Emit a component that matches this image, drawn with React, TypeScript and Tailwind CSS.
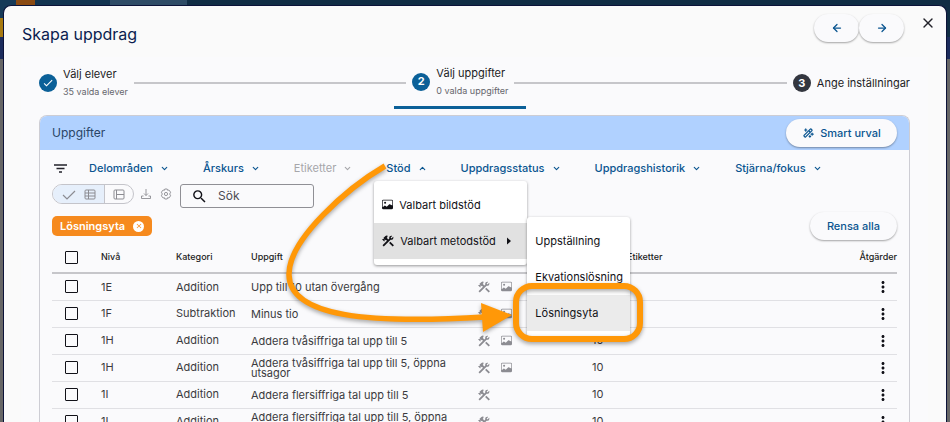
import { Fragment } from 'react'
import type { ReactNode } from 'react'
import { BsImage } from 'react-icons/bs'
import { MdMoreVert, MdSearch, MdClose, MdCheck } from 'react-icons/md'
import { PiMagicWandBold } from 'react-icons/pi'
import { ArrowLeft, ArrowRight, ChevronDown, ChevronUp, X } from 'lucide-react'

const filters = [
  { name: 'Delområden' },
  { name: 'Årskurs' },
  { name: 'Etiketter', disabled: true },
  { name: 'Stöd', open: true },
  { name: 'Uppdragsstatus' },
  { name: 'Uppdragshistorik' },
  { name: 'Stjärna/fokus' },
]

const methods = ['Uppställning', 'Ekvationslösning', 'Lösningsyta']

const rows = [
  { level: '1E', category: 'Addition', task: 'Upp till 10 utan övergång', image: true },
  { level: '1F', category: 'Subtraktion', task: 'Minus tio', image: true },
  { level: '1H', category: 'Addition', task: 'Addera tvåsiffriga tal upp till 5', image: true, count: 10 },
  { level: '1H', category: 'Addition', task: 'Addera tvåsiffriga tal upp till 5, öppna utsagor', image: true, count: 10 },
  { level: '1I', category: 'Addition', task: 'Addera flersiffriga tal upp till 5', image: false, count: 10 },
  { level: '1I', category: 'Addition', task: 'Addera flersiffriga tal upp till 5, öppna utsagor', image: false, count: 10 },
]

function Pill({ children, className = '', ...rest }: { children: ReactNode; className?: string; 'aria-label'?: string }) {
  return (
    <button
      className={`flex h-7 items-center justify-center gap-1.5 rounded-full bg-[#fafafc] text-[11px] font-medium text-[#0a5590] shadow-[0_1px_2px_rgba(0,0,0,0.35)] ${className}`}
      {...rest}
    >
      {children}
    </button>
  )
}

function ToolsIcon() {
  return (
    <svg viewBox="2 2 20 20" className="size-3" fill="currentColor" aria-hidden="true">
      <path d="M13.78 15.3L19.78 21.3L21.89 19.14L15.89 13.14L13.78 15.3M17.5 10.1C17.11 10.1 16.69 10.05 16.36 9.91L4.97 21.25L2.86 19.14L10.27 11.74L8.5 9.96L7.78 10.66L6.33 9.25V12.11L5.63 12.81L2.11 9.25L2.81 8.55H5.62L4.22 7.14L7.78 3.58C8.95 2.41 10.83 2.41 12 3.58L9.89 5.74L11.3 7.14L10.59 7.85L12.38 9.63L14.2 7.75C14.06 7.42 14 7 14 6.63C14 4.66 15.56 3.11 17.5 3.11C18.09 3.11 18.61 3.25 19.08 3.53L16.41 6.2L17.91 7.7L20.58 5.03C20.86 5.5 21 6 21 6.63C21 8.55 19.45 10.1 17.5 10.1Z" />
    </svg>
  )
}

function Checkbox({ label }: { label: string }) {
  return (
    <input
      type="checkbox"
      aria-label={label}
      className="block size-[13px] appearance-none rounded-[1px] border-[1.5px] border-[#111118] checked:bg-[#0b6098]"
    />
  )
}

function StepBadge({ children, className }: { children: ReactNode; className: string }) {
  return (
    <span className={`flex size-[18px] shrink-0 items-center justify-center rounded-full text-[11px] font-bold text-white ${className}`}>
      {children}
    </span>
  )
}

function StepText({ title, info }: { title: string; info: string }) {
  return (
    <div>
      <div className="text-[11px] leading-[18px] text-[#1c1c24]">{title}</div>
      <div className="text-[9px] leading-[18px] text-[#66666c]">{info}</div>
    </div>
  )
}

function Stepper() {
  return (
    <ol className="flex h-[52px] items-center">
      <li className="flex items-center gap-1.5">
        <StepBadge className="bg-[#0b6098]">
          <MdCheck className="size-3" />
        </StepBadge>
        <StepText title="Välj elever" info="35 valda elever" />
      </li>
      <li aria-hidden="true" className="ml-1.5 h-0.5 flex-1 bg-[#c6c6ca]" />
      <li className="-mx-3 flex h-[52px] items-center gap-1.5 border-b-[3px] border-[#0b6098] px-[18px]" aria-current="step">
        <StepBadge className="bg-[#0b6098]">2</StepBadge>
        <StepText title="Välj uppgifter" info="0 valda uppgifter" />
      </li>
      <li aria-hidden="true" className="mr-1.5 h-0.5 flex-1 bg-[#c6c6ca]" />
      <li className="flex items-center gap-1.5">
        <StepBadge className="bg-[#33363f]">3</StepBadge>
        <span className="text-[11px] text-[#1c1c24]">Ange inställningar</span>
      </li>
    </ol>
  )
}

function SupportMenu() {
  return (
    <div role="menu" className="absolute top-[21px] -left-3 z-10 w-[153px] rounded-[3px] bg-white py-1.5 text-[11px] font-normal text-[#111116] shadow-[0_1px_3px_rgba(0,0,0,0.4)]">
      <button role="menuitem" className="flex h-9 w-full items-center gap-1.5 px-2">
        <BsImage className="size-[11px]" />
        Valbart bildstöd
      </button>
      <div className="relative">
        <button role="menuitem" aria-haspopup="menu" aria-expanded="true" className="flex h-9 w-full items-center gap-1.5 bg-[#e1e1e1] px-2">
          <ToolsIcon />
          Valbart metodstöd
          <svg viewBox="0 0 4 8" className="mr-2 ml-auto h-2 w-1" fill="currentColor" aria-hidden="true">
            <path d="M0 0.5 L4 4 L0 7.5z" />
          </svg>
        </button>
        <div role="menu" className="absolute -top-1.5 left-full w-[103px] rounded-[3px] bg-white py-1.5 shadow-[0_1px_3px_rgba(0,0,0,0.4)]">
          {methods.map((name) => (
            <button
              key={name}
              role="menuitem"
              className={`flex h-9 w-full items-center px-2 ${name === 'Lösningsyta' ? 'bg-[#ebebeb]' : ''}`}
            >
              {name}
            </button>
          ))}
        </div>
      </div>
    </div>
  )
}

function Pointer() {
  return (
    <svg
      viewBox="280 155 370 195"
      className="pointer-events-none absolute -top-1.5 left-[-107px] z-20 h-[195px] w-[370px] max-w-none drop-shadow-[0_2px_2px_rgba(0,0,0,0.35)]"
      fill="none"
      aria-hidden="true"
    >
      <path d="M386 167 C350 188 289 240 290 276 C291 318 370 325 486 318" stroke="#ff9808" strokeWidth="5.5" />
      <path d="M482 304 L513 316 L484 333z" fill="#ff9808" />
      <rect x="517" y="287" width="124" height="53" rx="16" stroke="#ff9808" strokeWidth="6" />
    </svg>
  )
}

function Filters() {
  return (
    <div className="flex h-5 items-center text-[11px] text-[#0a5590]">
      <button aria-label="Filter" className="mr-[22px] ml-0.5 text-[#22222a]">
        <svg viewBox="0 0 13 9" className="h-[9px] w-[13px]" stroke="currentColor" strokeWidth="1.5">
          <path d="M0 1h13M2.500 4.500h8M5 8h3" />
        </svg>
      </button>
      <div className="flex gap-[34px]">
        {filters.map((f) => {
          const Chevron = f.open ? ChevronUp : ChevronDown
          return (
            <div key={f.name} className="relative">
              <button disabled={f.disabled} className="flex items-center gap-[7px] font-medium disabled:font-normal disabled:text-[#a6a6aa]">
                {f.name}
                <Chevron className="size-[9px]" strokeWidth={3} />
              </button>
              {f.open && (
                <Fragment>
                  <SupportMenu />
                  <Pointer />
                </Fragment>
              )}
            </div>
          )
        })}
      </div>
    </div>
  )
}

function Toolbar() {
  return (
    <div className="flex items-start text-[#8c8c92]">
      <div className="flex h-5 w-[82px] overflow-hidden rounded-full border border-[#c4c4ca]">
        <button aria-label="Kompakt vy" aria-pressed="true" className="flex w-[52px] items-center justify-center gap-2 border-r border-[#c4c4ca] bg-[#e6effb]">
          <svg viewBox="0 0 14 11" className="h-[11px] w-[14px]" fill="none" stroke="currentColor" strokeWidth="1.2">
            <path d="M1 6 L5 10 L13 2" />
          </svg>
          <svg viewBox="0 0 12 11" className="h-[11px] w-3" fill="none" stroke="currentColor">
            <rect x="1" y="1" width="10" height="9" rx="1" />
            <path d="M1 4h10M1 7h10M4.5 1v9" />
          </svg>
        </button>
        <button aria-label="Bred vy" className="flex flex-1 items-center justify-center">
          <svg viewBox="0 0 12 11" className="h-[11px] w-3" fill="none" stroke="currentColor">
            <rect x="1" y="1" width="10" height="9" rx="1" />
            <path d="M3.5 1v9M3.5 5.5h7.500" />
          </svg>
        </button>
      </div>
      <button aria-label="Ladda ner" className="mt-1 ml-1.5">
        <svg viewBox="0 0 12 12" className="size-3" fill="none" stroke="currentColor" strokeWidth="0.9">
          <path d="M6 1v6.500M4 5.500L6 7.500L8 5.500M3.500 8H1.500v2.500h9V8h-2" />
        </svg>
      </button>
      <button aria-label="Inställningar" className="mt-1 ml-2">
        <svg viewBox="0 0 12 12" className="size-3" fill="none" stroke="currentColor" strokeWidth="0.9">
          <path d="M4.800 1h2.400l.4 1.300 1.300-.3 1.700 2.200-.9 1.800.9 1.800-1.700 2.200-1.300-.3-.4 1.300H4.800l-.4-1.300-1.300.3L1.400 7.800 2.300 6l-.9-1.800L3.100 2l1.300.3z" />
          <circle cx="6" cy="6" r="1.600" />
        </svg>
      </button>
      <label className="ml-2 flex h-6 w-[134px] items-center gap-2.5 rounded-[3px] border border-[#8f8f95] px-2.5">
        <MdSearch className="size-[17px] shrink-0 text-[#111118]" />
        <input type="search" aria-label="Sök" placeholder="Sök" className="min-w-0 flex-1 text-xs outline-none placeholder:text-[#4c4c52]" />
      </label>
    </div>
  )
}

function TaskTable() {
  return (
    <table className="w-full table-fixed border-collapse text-left text-[11px] text-[#3a3a40]">
      <thead>
        <tr className="h-[31px] border-b-2 border-[#c6c6ca] text-[9px] text-[#1c1c22]">
          <th className="w-[49px] pl-[13px]"><Checkbox label="Markera alla" /></th>
          <th className="w-[75px] font-medium">Nivå</th>
          <th className="w-[75px] font-medium">Kategori</th>
          <th className="w-[227px] font-medium">Uppgift</th>
          <th className="w-[114px]" aria-label="Stöd" />
          <th className="w-[35px]" aria-label="Antal" />
          <th className="font-medium">Etiketter</th>
          <th className="text-right font-medium">Åtgärder</th>
        </tr>
      </thead>
      <tbody>
        {rows.map((r, i) => (
          <tr key={i} className="h-[27px] border-b border-[#e0e0e4]">
            <td className="pl-[13px]"><Checkbox label={`Markera ${r.task}`} /></td>
            <td>{r.level}</td>
            <td>{r.category}</td>
            <td className="pr-6 leading-[10px]">{r.task}</td>
            <td>
              <div className="flex items-center gap-[11px] text-[#8c8c92]">
                <ToolsIcon />
                {r.image && <BsImage className="size-[11px]" />}
              </div>
            </td>
            <td>{r.count}</td>
            <td />
            <td className="pr-[5px]">
              <button aria-label="Fler val" className="ml-auto block text-[#111118]">
                <MdMoreVert className="size-[18px]" />
              </button>
            </td>
          </tr>
        ))}
      </tbody>
    </table>
  )
}

function Backdrop() {
  return (
    <div aria-hidden="true" className="absolute inset-0 bg-[#666]">
      <div className="flex h-[37px] bg-[#102d44]">
        <div className="flex w-4 flex-col bg-[#163a58]">
          <div className="h-[18px]" />
          <div className="flex-1 bg-[#a87a10]" />
        </div>
        <div className="w-[19px] bg-[#8a4a12]" />
        <div className="w-[75px] bg-[#123450]" />
        <div className="w-[77px] bg-[#2e4c66]" />
      </div>
      <div className="flex h-[22px] bg-[#1c2c5c]" />
    </div>
  )
}

export default function App() {
  return (
    <div className="relative h-screen overflow-hidden px-[3px] pt-[5px] font-['Inter',sans-serif]">
      <Backdrop />
      <main role="dialog" aria-labelledby="title" className="relative min-h-full rounded-t-[8px] border border-b-0 border-[#0b1238] bg-[#fafafa]">
        <header className="flex items-start pt-2 pr-2.5 pl-[18px]">
          <h1 id="title" className="mt-2 flex-1 text-base leading-6 text-[#0b1d4f]">Skapa uppdrag</h1>
          <Pill aria-label="Föregående" className="w-[45px]"><ArrowLeft className="size-3" strokeWidth={2.5} /></Pill>
          <Pill aria-label="Nästa" className="w-[45px]"><ArrowRight className="size-3" strokeWidth={2.5} /></Pill>
          <button aria-label="Stäng" className="mt-px ml-4 text-[#22222a]">
            <X className="size-4" strokeWidth={2} />
          </button>
        </header>
        <section className="mr-[18px] ml-[17px] mt-[11px] bg-[#fafafc] px-[18px]">
          <Stepper />
          <div className="mt-1.5 rounded-t-[8px] border border-b-0 border-[#cdcdd4]">
            <div className="flex h-[34px] items-center justify-between rounded-t-[7px] bg-[#b0d1ff] px-3">
              <h2 className="text-xs text-[#2a4566]">Uppgifter</h2>
              <Pill className="w-[111px]"><PiMagicWandBold className="size-3" />Smart urval</Pill>
            </div>
            <div className="px-3 pt-2">
              <Filters />
              <div className="mt-1.5">
                <Toolbar />
              </div>
              <div className="mt-1 flex items-center justify-between">
                <button className="flex h-5 items-center gap-2 rounded-[5px] bg-[#f68a1e] px-2 text-[11px] font-semibold text-white">
                  Lösningsyta
                  <span className="flex size-[11px] items-center justify-center rounded-full bg-white text-[#f68a1e]">
                    <MdClose className="size-2" />
                  </span>
                </button>
                <Pill className="w-[87px]">Rensa alla</Pill>
              </div>
              <div className="mt-0.5">
                <TaskTable />
              </div>
            </div>
          </div>
        </section>
      </main>
    </div>
  )
}
